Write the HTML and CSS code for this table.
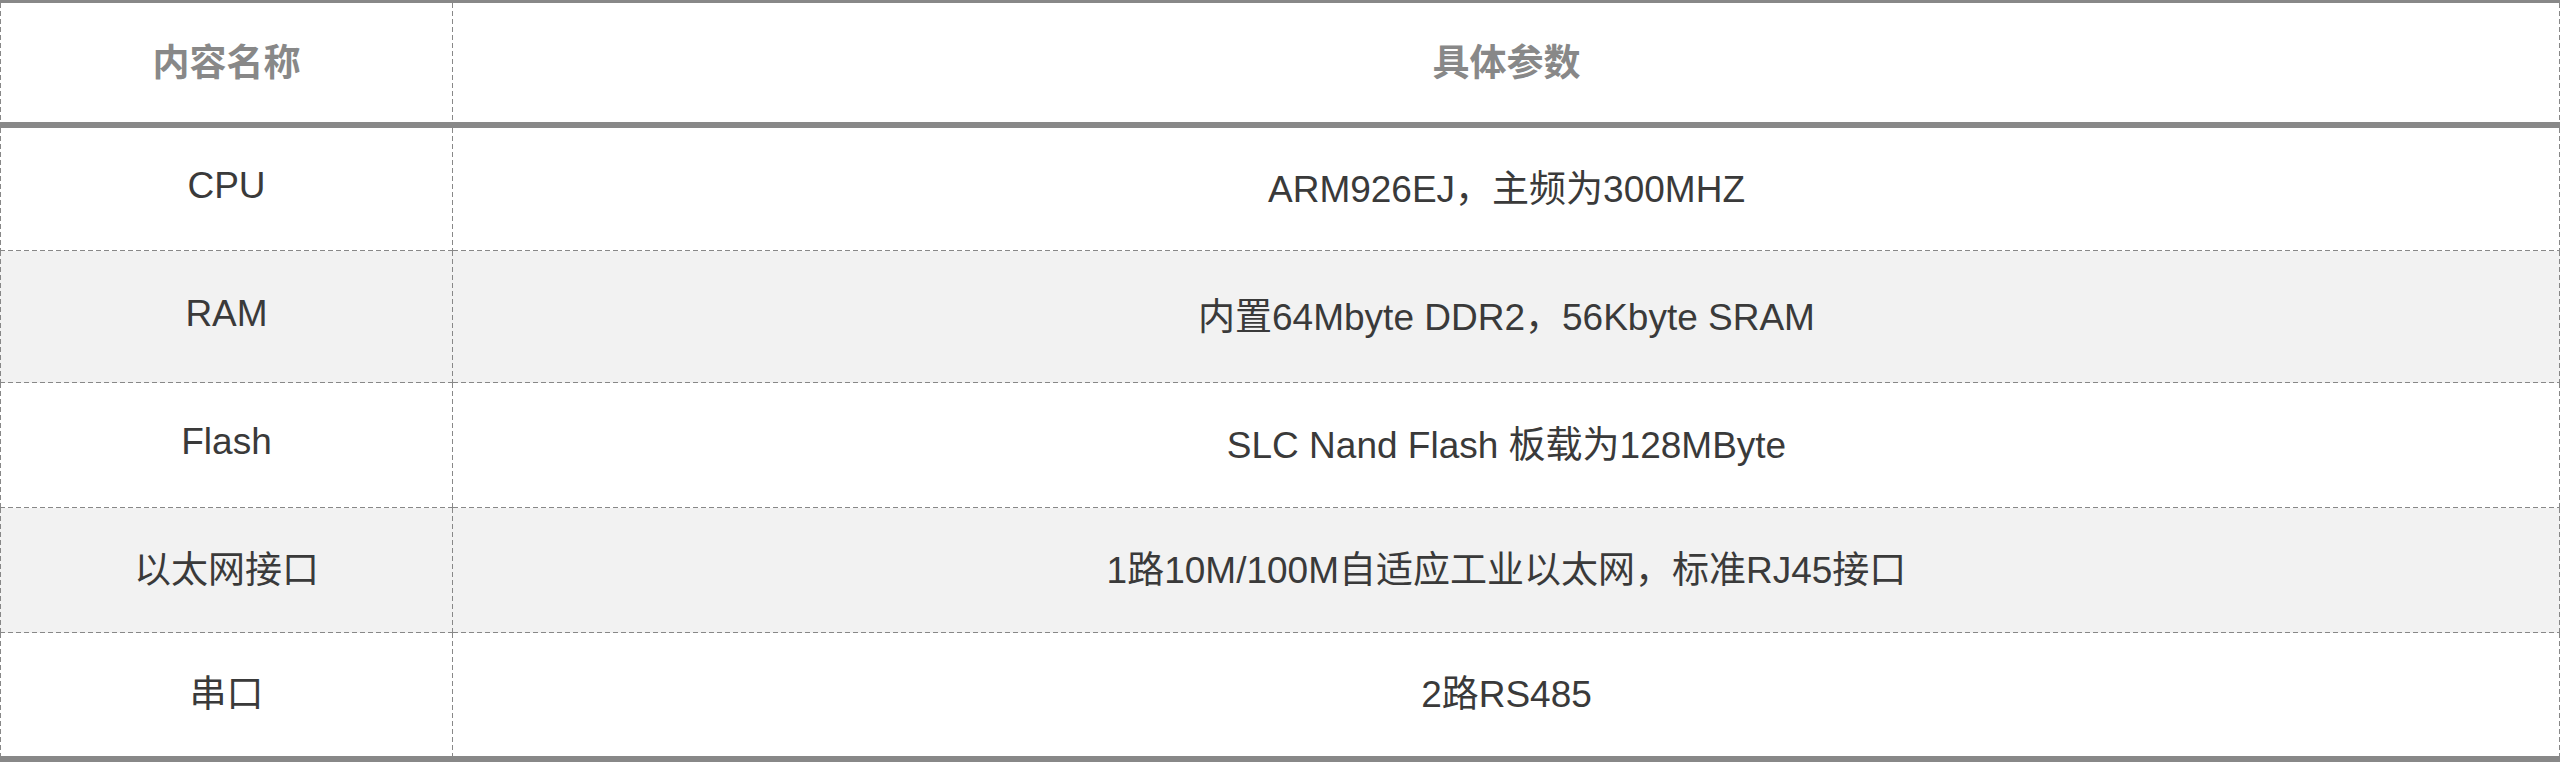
FILE: index.html
```html
<!DOCTYPE html>
<html lang="zh-CN">
<head>
<meta charset="utf-8">
<title>参数表</title>
<link rel="stylesheet" href="styles.css">
</head>
<body>
<div class="spec-table">
  <div class="row row-head">
    <div class="cell cell-name"><span class="txt">内容名称</span></div>
    <div class="cell cell-value"><span class="txt">具体参数</span></div>
  </div>
  <div class="row row-1">
    <div class="cell cell-name"><span class="txt">CPU</span></div>
    <div class="cell cell-value"><span class="txt">ARM926EJ，主频为300MHZ</span></div>
  </div>
  <div class="row row-2 row-alt">
    <div class="cell cell-name"><span class="txt">RAM</span></div>
    <div class="cell cell-value"><span class="txt">内置64Mbyte DDR2，56Kbyte SRAM</span></div>
  </div>
  <div class="row row-3">
    <div class="cell cell-name"><span class="txt">Flash</span></div>
    <div class="cell cell-value"><span class="txt">SLC Nand Flash 板载为128MByte</span></div>
  </div>
  <div class="row row-4 row-alt">
    <div class="cell cell-name"><span class="txt">以太网接口</span></div>
    <div class="cell cell-value"><span class="txt">1路10M/100M自适应工业以太网，标准RJ45接口</span></div>
  </div>
  <div class="row row-5 row-last">
    <div class="cell cell-name"><span class="txt">串口</span></div>
    <div class="cell cell-value"><span class="txt">2路RS485</span></div>
  </div>
</div>
</body>
</html>
```
FILE: styles.css
```css
html, body {
  margin: 0;
  padding: 0;
  background: #ffffff;
}

.spec-table {
  width: 2560px;
  font-family: "Liberation Sans", "Noto Sans CJK SC", sans-serif;
  font-size: 37px;
  color: #3a3a3a;
}

.row {
  display: grid;
  grid-template-columns: 453px 1fr;
}

/* dashed lines drawn as backgrounds for a longer dash than the browser's 1px dash */
.cell {
  --dash-h: repeating-linear-gradient(to right, #888888 0 5px, transparent 5px 8px);
  --dash-v: repeating-linear-gradient(to bottom, #888888 0 5px, transparent 5px 8px);
  --bottom-line: 1px;
  box-sizing: border-box;
  display: flex;
  align-items: center;
  justify-content: center;
  padding-bottom: 7px;
  white-space: nowrap;
  line-height: 80px;
  background-color: transparent;
  background-image: var(--dash-h), var(--dash-v);
  background-size: 100% var(--bottom-line), 1px 100%;
  background-position: left bottom, right top;
  background-repeat: no-repeat;
}

.txt {
  line-height: normal;
}

.cell-name {
  background-image: var(--dash-h), var(--dash-v), var(--dash-v);
  background-size: 100% var(--bottom-line), 1px 100%, 1px 100%;
  background-position: left bottom, right top, left top;
}

.row-head .cell {
  --bottom-line: 0px;
  border-top: 3px solid #888888;
  border-bottom: 6px solid #888888;
  padding-bottom: 5px;
  font-weight: bold;
  color: #888888;
  height: 128px;
}

.row-1 .cell { height: 123px; }
.row-2 .cell { height: 132px; }
.row-3 .cell { height: 125px; }
.row-4 .cell { height: 125px; }
.row-5 .cell { height: 129px; }

.row-alt .cell {
  background-color: #f2f2f2;
}

.row-last .cell {
  --bottom-line: 0px;
  border-bottom: 6px solid #888888;
}
```
